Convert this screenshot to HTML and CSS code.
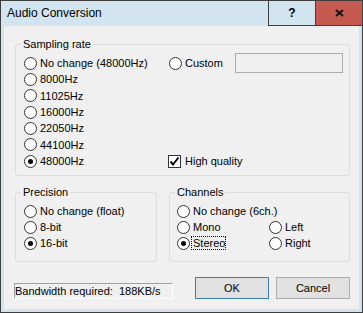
FILE: index.html
```html
<!DOCTYPE html>
<html lang="en">
<head>
    <meta charset="UTF-8">
    <title>Audio Conversion</title>
    <link rel="stylesheet" href="styles.css">
</head>
<body>
    <div class="window">
        <div class="titlebar">
            <span class="title">Audio Conversion</span>
            <div class="caption-btn help">?</div>
            <div class="caption-btn close">
                <svg width="9" height="8" viewBox="0 0 9 8"><path d="M1 1L8 7M8 1L1 7" stroke="#111" stroke-width="2"/></svg>
            </div>
        </div>

        <div class="client">
            <div class="group sampling">
                <span class="group-label">Sampling rate</span>
                <div class="sampling-body">
                    <div class="col">
                        <div class="row"><span class="radio"></span><span>No change (48000Hz)</span></div>
                        <div class="row"><span class="radio"></span><span>8000Hz</span></div>
                        <div class="row"><span class="radio"></span><span>11025Hz</span></div>
                        <div class="row"><span class="radio"></span><span>16000Hz</span></div>
                        <div class="row"><span class="radio"></span><span>22050Hz</span></div>
                        <div class="row"><span class="radio"></span><span>44100Hz</span></div>
                        <div class="row"><span class="radio checked"></span><span>48000Hz</span></div>
                    </div>
                    <div class="col side">
                        <div class="row custom">
                            <span class="radio"></span><span>Custom</span>
                            <span class="edit"></span>
                        </div>
                        <div class="row">
                            <span class="checkbox">
                                <svg width="11" height="11" viewBox="0 0 11 11"><path d="M1.5 5.5L4 8.5L9.5 1.5" fill="none" stroke="#000" stroke-width="2"/></svg>
                            </span>
                            <span>High quality</span>
                        </div>
                    </div>
                </div>
            </div>

            <div class="lower">
                <div class="group precision">
                    <span class="group-label">Precision</span>
                    <div class="row"><span class="radio"></span><span>No change (float)</span></div>
                    <div class="row"><span class="radio"></span><span>8-bit</span></div>
                    <div class="row"><span class="radio checked"></span><span>16-bit</span></div>
                </div>
                <div class="group channels">
                    <span class="group-label">Channels</span>
                    <div class="channel-grid">
                        <div class="row wide"><span class="radio"></span><span>No change (6ch.)</span></div>
                        <div class="row"><span class="radio"></span><span>Mono</span></div>
                        <div class="row"><span class="radio"></span><span>Left</span></div>
                        <div class="row"><span class="radio checked"></span><span class="focus">Stereo</span></div>
                        <div class="row"><span class="radio"></span><span>Right</span></div>
                    </div>
                </div>
            </div>

            <div class="footer">
                <div class="bandwidth">Bandwidth required:&nbsp; 188KB/s</div>
                <div class="buttons">
                    <div class="button default">OK</div>
                    <div class="button">Cancel</div>
                </div>
            </div>
        </div>
    </div>
</body>
</html>
```

FILE: styles.css
```css
* {
    box-sizing: border-box;
}
body {
    margin: 0;
    font-family: 'Liberation Sans', Arial, sans-serif;
    font-size: 11px;
    color: #000;
    background: #fff;
}
.window {
    width: 363px;
    height: 313px;
    border: 1px solid #3f3f3f;
    background-color: #d1e4ef;
    display: flex;
    flex-direction: column;
}
.titlebar {
    height: 25px;
    display: flex;
    align-items: stretch;
}
.title {
    flex: 1;
    padding-left: 6px;
    font-size: 12px;
    line-height: 25px;
}
.caption-btn {
    display: flex;
    align-items: center;
    justify-content: center;
    border-left: 1px solid #3f3f3f;
    border-bottom: 1px solid #3f3f3f;
}
.help {
    width: 47px;
    font-size: 12px;
    font-weight: bold;
}
.close {
    width: 47px;
    background-color: #c75a50;
}
.client {
    flex: 1;
    margin: 0 3px 3px;
    background-color: #f0f0f0;
    padding: 18px 9px 10px 11px;
    display: flex;
    flex-direction: column;
}

/* group boxes */
.group {
    position: relative;
    border: 1px solid #dcdcdc;
    border-radius: 3px;
}
.group-label {
    position: absolute;
    top: -8px;
    left: 5px;
    padding: 0 2px;
    line-height: 14px;
    background-color: #f0f0f0;
}
.sampling {
    height: 132px;
    padding: 10px 6px 0 8px;
}
.sampling-body {
    display: grid;
    grid-template-columns: 144px 1fr;
}
.side {
    display: flex;
    flex-direction: column;
    justify-content: space-between;
}
.row {
    display: flex;
    align-items: center;
    gap: 3px;
    height: 16.33px;
    white-space: nowrap;
}
.custom .radio {
    margin-left: 1px;
}
.edit {
    margin-left: auto;
    width: 108px;
    height: 20px;
    border: 1px solid #acacac;
    background-color: #f0f0f0;
}

/* radio + checkbox */
.radio {
    width: 13px;
    height: 13px;
    border: 1px solid #333;
    border-radius: 50%;
    background-color: #fff;
    display: flex;
    align-items: center;
    justify-content: center;
    flex: none;
}
.radio.checked::after {
    content: "";
    width: 5px;
    height: 5px;
    border-radius: 50%;
    background-color: #000;
}
.checkbox {
    width: 13px;
    height: 13px;
    border: 1px solid #333;
    background-color: #fff;
    display: flex;
    align-items: center;
    justify-content: center;
    flex: none;
    margin-right: 1px;
}

.lower {
    display: flex;
    gap: 12px;
    margin-top: 16px;
    height: 70px;
}
.precision {
    width: 142px;
    padding: 10px 0 0 8px;
}
.precision .row,
.channels .row {
    height: 16px;
}
.channels {
    width: 181px;
    padding: 10px 0 0 7px;
}
.channel-grid {
    display: grid;
    grid-template-columns: 92px 1fr;
}
.channel-grid .wide {
    grid-column: 1 / 3;
}
.focus {
    outline: 1px dotted #000;
    margin-left: -1px;
    padding-left: 1px;
}

/* footer */
.footer {
    margin-top: 15px;
    display: flex;
    align-items: flex-end;
    height: 22px;
}
.bandwidth {
    margin-left: -1px;
    width: 159px;
    height: 16px;
    line-height: 14px;
    border: 1px solid #fff;
    border-top-color: #a0a0a0;
    border-left-color: #a0a0a0;
}
.buttons {
    margin-left: auto;
    display: flex;
    gap: 7px;
}
.button {
    width: 74px;
    height: 22px;
    border: 1px solid #adadad;
    background-color: #e1e1e1;
    display: flex;
    align-items: center;
    justify-content: center;
}
.button.default {
    border-color: #3c7fb1;
}
```
